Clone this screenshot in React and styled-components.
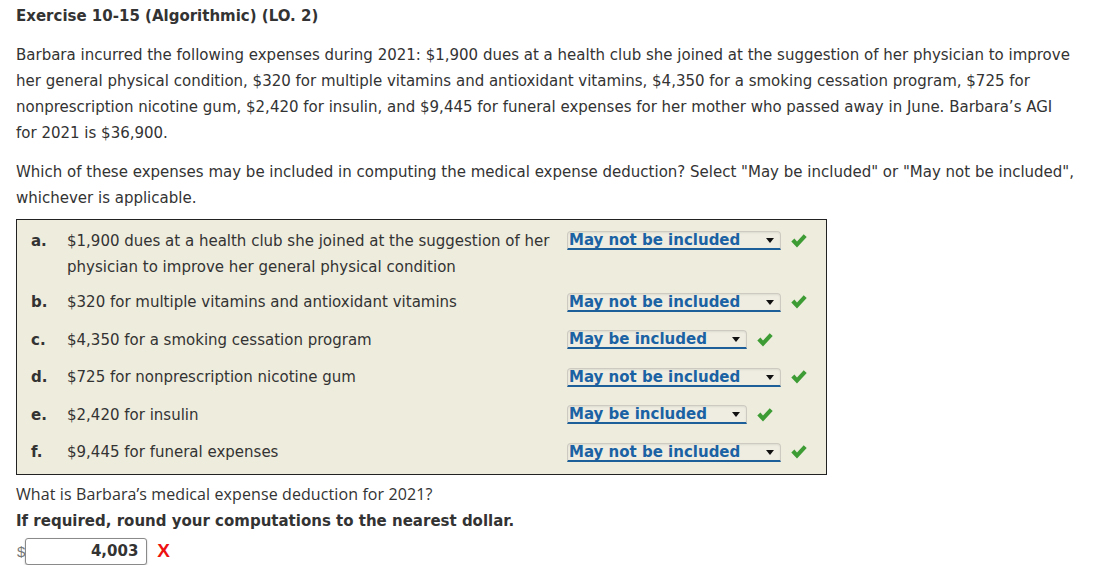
import React from 'react';
import styled, { createGlobalStyle } from 'styled-components';

const Global = createGlobalStyle`
  body {
    margin: 0;
    background: #fff;
    color: #333;
    font-family: Verdana, "DejaVu Sans", sans-serif;
    font-size: 15px;
  }
`
const Page = styled.div`
  padding: 6px 16px 0 16px;
`
const Title = styled.h1`
  font-size: 15px;
  font-weight: bold;
  line-height: 20px;
  margin: 0 0 16px 0;
  color: #333;
`
const Para = styled.p`
  width: 1060px;
  margin: 0 0 13px 0;
  line-height: 26px;
`
const Box = styled.div`
  width: 809px;
  border: 1px solid #222;
  background: #eeecdd;
  padding: 2px 0 3px 0;
  margin-top: -5px;
`
const Row = styled.div`
  display: flex;
  align-items: ${p => (p.top ? 'flex-start' : 'center')};
  padding: 5.75px 0 ${p => (p.top ? '3.5px' : '5.75px')} 14px;
  line-height: 26px;
`
const Letter = styled.div`
  width: 36px;
  font-weight: bold;
  flex-shrink: 0;
`
const Desc = styled.div`
  width: 490px;
  flex-shrink: 0;
`
const Answer = styled.div`
  display: flex;
  align-items: center;
  margin-left: 10px;
  height: 26px;
`
const Select = styled.div`
  position: relative;
  width: ${p => p.w}px;
  height: 19px;
  box-sizing: border-box;
  border: 1px solid #cdcbc1;
  border-bottom: 2px solid #1d5f99;
  border-radius: 4px 4px 0 0;
  background: #efede2;
  box-shadow: inset 0 1px 2px rgba(0, 0, 0, 0.08);
  color: #1a62a3;
  font-weight: bold;
  font-size: 15px;
  line-height: 17px;
  padding-left: 1px;
  text-decoration: underline;
  text-decoration-thickness: 1px;
  text-underline-offset: 3px;
  white-space: nowrap;
  overflow: hidden;
`
const Arrow = styled.span`
  position: absolute;
  right: 6px;
  top: 6px;
  width: 0;
  height: 0;
  border-left: 4px solid transparent;
  border-right: 4px solid transparent;
  border-top: 5px solid #111;
`
const Check = styled.svg`
  margin-left: 10px;
  width: 16px;
  height: 14px;
  flex-shrink: 0;
`
const Plain = styled.p`
  margin: 7px 0 0 0;
  font-family: "Open Sans", Arial, sans-serif;
  font-size: 16px;
  letter-spacing: 0.1px;
  line-height: 24px;
`
const Bold = styled.p`
  margin: 2px 0 0 0;
  font-weight: bold;
  line-height: 26px;
`
const InputRow = styled.div`
  display: flex;
  align-items: center;
  margin-top: 4px;
`
const Dollar = styled.span`
  font-family: Arial, "Liberation Sans", sans-serif;
  font-size: 15px;
  color: #777;
  margin-left: 1px;
`
const Input = styled.div`
  width: 122px;
  height: 27px;
  box-sizing: border-box;
  border: 1px solid #8a8a8a;
  border-radius: 3px;
  box-shadow: 0 1px 2px rgba(0, 0, 0, 0.25);
  background: #fff;
  text-align: right;
  padding-right: 8px;
  font-weight: bold;
  line-height: 25px;
  color: #333;
`
const Cross = styled.span`
  margin-left: 10px;
  color: #ee1111;
  font-weight: bold;
  font-family: Arial, "Liberation Sans", sans-serif;
  font-size: 19px;
`

const rows = [
  { l: 'a.', t: '$1,900 dues at a health club she joined at the suggestion of her', t2: 'physician to improve her general physical condition', a: 'May not be included' },
  { l: 'b.', t: '$320 for multiple vitamins and antioxidant vitamins', a: 'May not be included' },
  { l: 'c.', t: '$4,350 for a smoking cessation program', a: 'May be included' },
  { l: 'd.', t: '$725 for nonprescription nicotine gum', a: 'May not be included' },
  { l: 'e.', t: '$2,420 for insulin', a: 'May be included' },
  { l: 'f.', t: '$9,445 for funeral expenses', a: 'May not be included' },
]

function Tick() {
  return (
    <Check viewBox="0 0 16 14">
      <path d="M0.3 7.4 L3.4 4.6 L6 7.4 L12.7 0.2 L15.7 3 L6 13.6 Z" fill="#3e9c35" />
    </Check>
  )
}

export default function App() {
  return (
    <Page>
      <Global />
      <Title>Exercise 10-15 (Algorithmic) (LO. 2)</Title>
      <Para>
        Barbara incurred the following expenses during 2021: $1,900 dues at a health club she joined at the suggestion of her physician to improve her general physical condition, $320 for multiple vitamins and antioxidant vitamins, $4,350 for a smoking cessation program, $725 for nonprescription nicotine gum, $2,420 for insulin, and $9,445 for funeral expenses for her mother who passed away in June. Barbara’s AGI for 2021 is $36,900.
      </Para>
      <Para>
        Which of these expenses may be included in computing the medical expense deduction? Select "May be included" or "May not be included", whichever is applicable.
      </Para>
      <Box>
        {rows.map(r => (
          <Row key={r.l} top={!!r.t2}>
            <Letter>{r.l}</Letter>
            <Desc>
              {r.t}
              {r.t2 && <><br />{r.t2}</>}
            </Desc>
            <Answer>
              <Select w={r.a === 'May be included' ? 180 : 214}>
                {r.a}
                <Arrow />
              </Select>
              <Tick />
            </Answer>
          </Row>
        ))}
      </Box>
      <Plain>What is Barbara’s medical expense deduction for 2021?</Plain>
      <Bold>If required, round your computations to the nearest dollar.</Bold>
      <InputRow>
        <Dollar>$</Dollar>
        <Input>4,003</Input>
        <Cross>X</Cross>
      </InputRow>
    </Page>
  )
}
